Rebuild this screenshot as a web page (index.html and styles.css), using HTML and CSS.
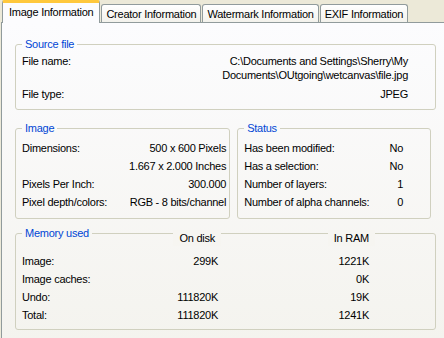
FILE: index.html
```html
<!DOCTYPE html>
<html lang="en">

<head>
<meta charset="UTF-8">
<meta name="viewport" content="width=device-width, initial-scale=1.0">
<title>Image Information</title>
<link rel="stylesheet" href="styles.css"></head>

<body>
<div class="tabs">
<div class="tab active">Image Information</div>
<div class="tab">Creator Information</div>
<div class="tab">Watermark Information</div>
<div class="tab">EXIF Information</div>
</div>

<div class="panel">
<!-- Source file -->
<fieldset class="group source">
<legend>Source file</legend>
<div class="row">
<span>File name:</span>
<span class="value">C:\Documents and Settings\Sherry\My<br>Documents\OUtgoing\wetcanvas\file.jpg</span>
</div>
<div class="row gap">
<span>File type:</span>
<span class="value">JPEG</span>
</div>
</fieldset>

<div class="pair">
<!-- Image -->
<fieldset class="group image">
<legend>Image</legend>
<div class="row"><span>Dimensions:</span><span class="value">500 x 600 Pixels</span></div>
<div class="row"><span></span><span class="value">1.667 x 2.000 Inches</span></div>
<div class="row"><span>Pixels Per Inch:</span><span class="value">300.000</span></div>
<div class="row"><span>Pixel depth/colors:</span><span class="value">RGB - 8 bits/channel</span></div>
</fieldset>

<!-- Status -->
<fieldset class="group status">
<legend>Status</legend>
<div class="row"><span>Has been modified:</span><span class="value">No</span></div>
<div class="row"><span>Has a selection:</span><span class="value">No</span></div>
<div class="row"><span>Number of layers:</span><span class="value">1</span></div>
<div class="row"><span>Number of alpha channels:</span><span class="value">0</span></div>
</fieldset>
</div>

<!-- Memory used -->
<fieldset class="group memory">
<legend>Memory used</legend>
<div class="mem-grid">
<span></span><span class="head disk">On disk</span><span class="head ram">In RAM</span>
<span>Image:</span><span class="num">299K</span><span class="num">1221K</span>
<span>Image caches:</span><span class="num"></span><span class="num">0K</span>
<span>Undo:</span><span class="num">111820K</span><span class="num">19K</span>
<span>Total:</span><span class="num">111820K</span><span class="num">1241K</span>
</div>
</fieldset>
</div>
</body>

</html>
```

FILE: styles.css
```css
body {
font-family: 'Liberation Sans', Arial, sans-serif;
font-size: 11px;
letter-spacing: -0.25px;
color: #000;
margin: 0;
padding: 0;
background-color: #ece9d8;
overflow: hidden;
}

.tabs {
display: flex;
align-items: flex-end;
height: 22px;
padding-left: 2px;
position: relative;
z-index: 1;
}

.tab {
height: 16px;
line-height: 16px;
padding: 1px 4px 0 4px;
margin-right: 1px;
border: 1px solid #919b9c;
border-bottom: none;
border-radius: 3px 3px 0 0;
background: linear-gradient(#ffffff, #f3f2ec);
white-space: nowrap;
}

.tab.active {
height: 19px;
line-height: 18px;
padding: 0 6px 1px 6px;
margin-bottom: -1px;
border-top: 3px solid #ffc83c;
border-radius: 2px 2px 0 0;
background: #fcfcfe;
}

.panel {
height: 320px;
margin-left: 1px;
padding: 0 13px;
border: 1px solid #919b9c;
border-right: none;
background: linear-gradient(#fcfcfe, #f4f3ee);
}

.group {
box-sizing: border-box;
margin: 0;
min-width: 0;
padding: 0 6px;
border: 1px solid #d0d0bf;
border-radius: 3px;
}

.group legend {
color: #0046d5;
padding: 0 3px;
}

.row {
display: flex;
justify-content: space-between;
}

.value {
text-align: right;
}

.source {
width: 421px;
margin-top: 14px;
padding: 3px 27px 8px 6px;
line-height: 14px;
}

.source .gap {
margin-top: 5px;
}

.pair {
display: flex;
gap: 7px;
margin-top: 9px;
}

.image,
.status {
line-height: 18px;
padding-top: 2px;
padding-bottom: 7px;
}

.image {
width: 218px;
padding-right: 3px;
}

.status {
width: 196px;
padding-right: 27px;
}

.memory {
width: 421px;
margin-top: 8px;
padding-bottom: 5px;
}

.mem-grid {
display: grid;
grid-template-columns: 120px 76px 151px;
line-height: 18px;
}

.mem-grid .num {
text-align: right;
}

.mem-grid .head {
justify-self: end;
line-height: 16px;
padding: 0 6px;
margin-top: -9px;
margin-bottom: 6px;
background: #f6f5f1;
}

.mem-grid .disk {
margin-right: -3px;
}

.mem-grid .ram {
margin-right: -6px;
}
```
